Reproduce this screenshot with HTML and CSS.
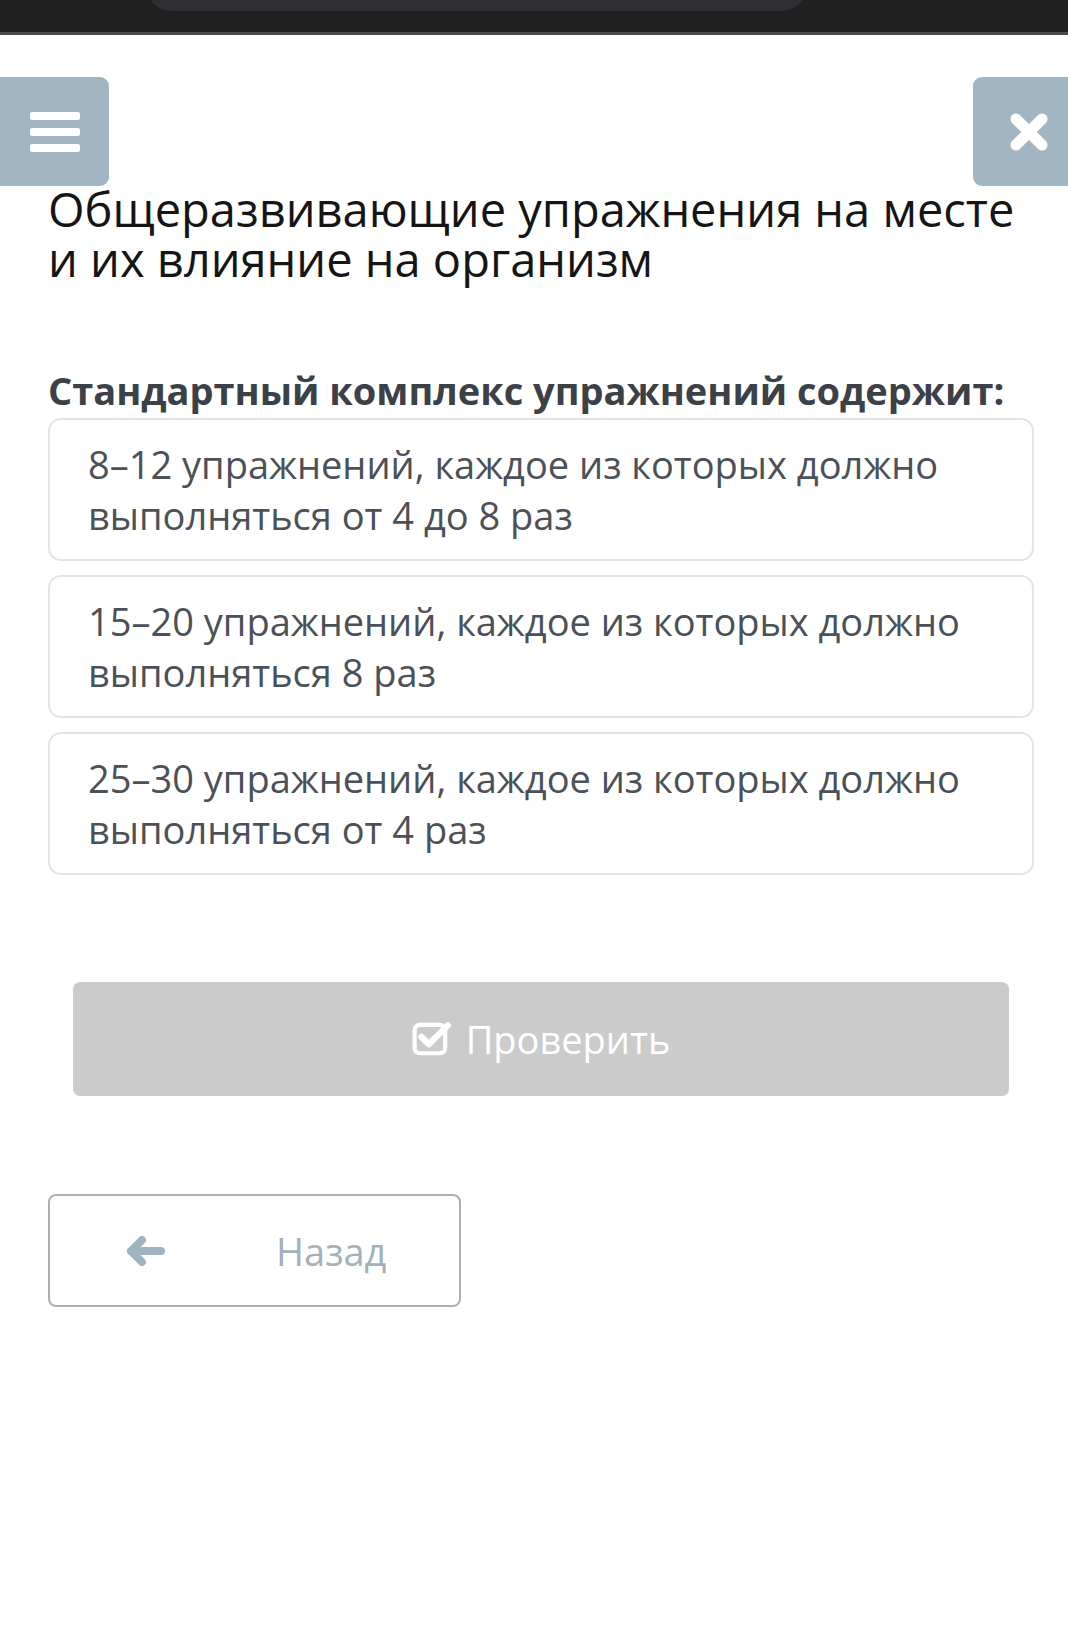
FILE: index.html
```html
<!DOCTYPE html>
<html lang="ru">
<head>
<meta charset="utf-8">
<link rel="stylesheet" href="styles.css">
</head>
<body>
<div class="topbar"><div class="urlpill"></div></div>
<div class="topline"></div>
<div class="toolrow">
  <div class="sidebtn menu">
    <svg width="50" height="40" viewBox="0 0 50 40"><rect x="0" y="0" width="50" height="8" rx="2" fill="#fff"/><rect x="0" y="16" width="50" height="8" rx="2" fill="#fff"/><rect x="0" y="32" width="50" height="8" rx="2" fill="#fff"/></svg>
  </div>
  <div class="sidebtn close">
    <svg width="40" height="40" viewBox="0 0 40 40"><path d="M7 7 L33 33 M33 7 L7 33" stroke="#fff" stroke-width="11" stroke-linecap="round"/></svg>
  </div>
</div>
<main class="content">
  <h1 class="title">Общеразвивающие упражнения на месте и их влияние на организм</h1>
  <h2 class="question">Стандартный комплекс упражнений содержит:</h2>
  <div class="options">
    <div class="option">8–12 упражнений, каждое из которых должно выполняться от 4 до 8 раз</div>
    <div class="option">15–20 упражнений, каждое из которых должно выполняться 8 раз</div>
    <div class="option">25–30 упражнений, каждое из которых должно выполняться от 4 раз</div>
  </div>
  <div class="checkwrap">
    <div class="checkbtn">
      <svg class="checkicon" width="40" height="36" viewBox="0 0 38 34"><rect x="2.5" y="4.5" width="29" height="27" rx="5" fill="none" stroke="#fff" stroke-width="4"/><path d="M9 16 L16 23 L34 5" fill="none" stroke="#fff" stroke-width="6" stroke-linecap="round" stroke-linejoin="round"/></svg>
      <span>Проверить</span>
    </div>
  </div>
  <div class="backbtn">
    <svg class="arrow" width="40" height="30" viewBox="0 0 40 30"><path d="M36 15 L6 15 M17 4 L6 15 L17 26" fill="none" stroke="#a0b3c1" stroke-width="8" stroke-linecap="round" stroke-linejoin="round"/></svg>
    <span>Назад</span>
  </div>
</main>
</body>
</html>
```

FILE: styles.css
```css
html, body {
  margin: 0;
  padding: 0;
  background: #ffffff;
  font-family: "Open Sans", "Noto Sans", sans-serif;
}
.topbar {
  height: 32px;
  background: #202020;
  position: relative;
  overflow: hidden;
}
.urlpill {
  position: absolute;
  left: 146px;
  width: 661px;
  top: -40px;
  height: 51px;
  border-radius: 26px;
  background: #2f3033;
}
.topline {
  height: 3px;
  background: #4a4a4a;
}
.toolrow {
  display: flex;
  justify-content: space-between;
  margin-top: 42px;
}
.sidebtn {
  height: 109px;
  background: #a2b5c2;
  display: flex;
  align-items: center;
  justify-content: center;
}
.menu {
  width: 109px;
  border-radius: 0 9px 9px 0;
  justify-content: flex-start;
  padding-left: 30px;
  box-sizing: border-box;
}
.close {
  width: 95px;
  border-radius: 9px 0 0 9px;
  padding-left: 36px;
  box-sizing: border-box;
  justify-content: flex-start;
}
.content {
  padding: 0 34px 0 48px;
}
.title {
  margin: -2px 0 0 0;
  padding-right: 10px;
  font-weight: 400;
  font-size: 47px;
  line-height: 50px;
  color: #151515;
}
.question {
  margin: 84px 0 0 0;
  font-weight: 700;
  font-size: 38px;
  line-height: 44px;
  color: #3b4147;
}
.options {
  display: flex;
  flex-direction: column;
  gap: 14px;
  margin-top: 6px;
}
.option {
  border: 2px solid #e3e3e3;
  border-radius: 13px;
  height: 143px;
  box-sizing: border-box;
  padding: 19px 30px 0 38px;
  font-size: 38px;
  line-height: 51px;
  color: #4b5157;
}
.checkwrap {
  padding: 0 25px;
  margin-top: 107px;
}
.checkbtn {
  height: 114px;
  background: #cbcbcb;
  border-radius: 7px;
  display: flex;
  align-items: center;
  justify-content: center;
  gap: 14px;
  color: #ffffff;
  font-size: 38px;
}
.checkicon {
  margin-top: -2px;
}
.backbtn {
  margin-top: 98px;
  width: 413px;
  height: 113px;
  box-sizing: border-box;
  border: 2px solid #a9b1b6;
  border-radius: 8px;
  display: flex;
  align-items: center;
  padding-left: 75px;
  gap: 111px;
  color: #a3b1ba;
  font-size: 38px;
}
```
